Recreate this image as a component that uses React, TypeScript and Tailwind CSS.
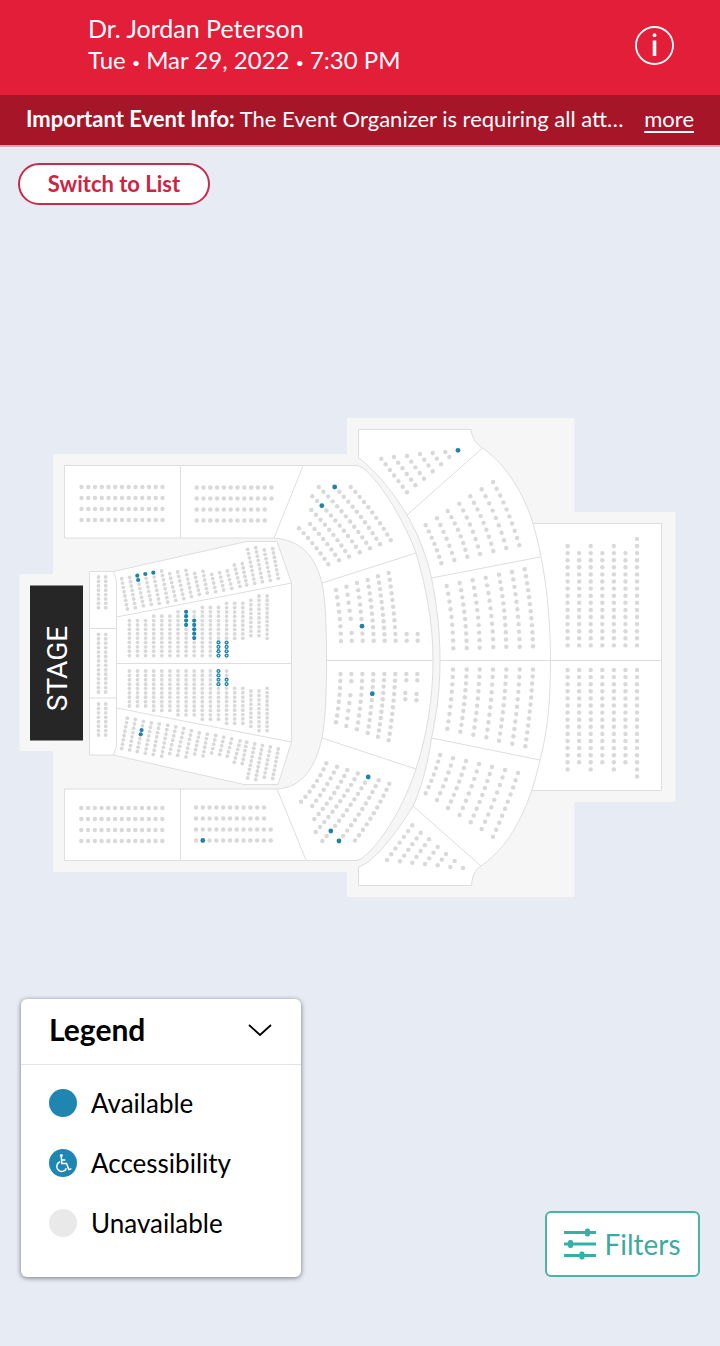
import { useState } from 'react';

type Row = {
  from: [number, number];
  to: [number, number];
  count: number;
  // how far the middle of the row bends away from a straight line
  bend?: number;
  available?: number[];
  accessible?: number[];
};

const row = (
  x1: number,
  y1: number,
  x2: number,
  y2: number,
  count: number,
  bend = 0,
  available: number[] = [],
): Row => ({ from: [x1, y1], to: [x2, y2], count, bend, available });

// ── Side boxes ─────────────────────────────────────────────────────────────
const boxRows: Row[] = [
  row(81.5, 487, 162.5, 487, 13),
  row(81.5, 498, 162.5, 498, 13),
  row(81.5, 509, 162.5, 509, 13),
  row(81.5, 520, 162.5, 520, 13),
  row(196.7, 487.5, 271.5, 487.5, 12),
  row(196.7, 498.5, 271.5, 498.5, 12),
  row(196.7, 509.5, 264.7, 509.5, 11),
  row(196.7, 520.5, 264.7, 520.5, 11),
  row(81.3, 808, 162.3, 808, 13),
  row(81.3, 819, 162.3, 819, 13),
  row(81.3, 830, 162.3, 830, 13),
  row(81.3, 841, 162.3, 841, 13),
  row(196, 807.5, 264, 807.5, 11),
  row(196, 818.5, 264, 818.5, 11),
  row(196, 829.5, 270.7, 829.5, 12),
  row(196, 840.5, 270.7, 840.5, 12, 0, [1]),
];

// ── Pit, in front of the stage ─────────────────────────────────────────────
const pitRows: Row[] = [98.5, 105.7].flatMap(x => [
  row(x, 577, x, 607.7, 8),
  row(x, 634.3, x, 692, 14),
  row(x, 704, x, 735, 8),
]);

// ── Orchestra, angled sides ────────────────────────────────────────────────
const ORCHESTRA_AXIS = 663.6;

const angledTop: Row[] = [
  row(121.7, 578.7, 127.3, 609, 8),
  row(129.7, 577.3, 135.3, 607.7, 8),
  row(137.3, 575.7, 143.3, 605.7, 8, 0, [0, 1]),
  row(145.3, 574, 151.3, 604.3, 8, 0, [0]),
  row(153.3, 572.7, 159.3, 603.3, 8, 0, [0]),
  row(161.7, 571, 167.7, 602, 8),
  row(169.7, 573.7, 175.7, 600.3, 7),
  row(177.7, 572, 183.7, 598.7, 7),
  row(186, 570.3, 191.3, 596.5, 7),
  row(194.7, 573.3, 199.3, 594.3, 6),
  row(203, 571.3, 207.3, 593, 6),
  row(211.7, 574.3, 215.7, 591.7, 5),
  row(219.7, 572.7, 223.7, 590, 5),
  row(227.3, 571, 231.7, 588.3, 5),
  row(234.3, 565, 240, 586.3, 6),
  row(242.3, 563.7, 246.7, 585, 6),
  row(247.7, 549.3, 254.7, 583.3, 9),
  row(255.7, 547.7, 262.3, 581.7, 9),
  row(264.3, 550, 270.3, 580.3, 8),
  row(272.7, 548.7, 278.3, 578.3, 8),
];

const flip = (r: Row, axis: number): Row => ({
  from: [r.from[0], axis * 2 - r.from[1]],
  to: [r.to[0], axis * 2 - r.to[1]],
  count: r.count,
});

const angledBottom: Row[] = angledTop.map((r, i) => ({
  ...flip(r, ORCHESTRA_AXIS),
  available: i === 2 ? [4, 5] : [],
}));

// ── Orchestra, centre ──────────────────────────────────────────────────────
// [top, bottom] of each column, counted from the stage
const centerColumns: [number, number][] = [
  [620.6, 655.6],
  [620.6, 655.6],
  [620.6, 655.6],
  [616.2, 655.6],
  [616.2, 655.6],
  [616.2, 655.6],
  [611.8, 655.6],
  [611.8, 655.6],
  [611.8, 655.6],
  [607.4, 655.6],
  [607.4, 655.6],
  [607.4, 655.6],
  [603.3, 655.6],
  [603.3, 638.3],
  [603.3, 638.3],
  [600.3, 635.6],
  [596, 635.6],
  [596, 638.3],
];

const centerTop: Row[] = centerColumns.map(([top, bottom], i) => {
  const x = 129.4 + i * 8.1;
  const count = Math.round((bottom - top) / 4.38) + 1;
  return row(x, top, x, bottom, count);
});
const centerBottom: Row[] = centerTop.map(r => flip(r, 663.3));

centerTop[7].available = [0, 1, 2, 3];
centerTop[8].available = [2, 3, 4, 5, 6];
centerTop[11].accessible = [8, 9, 10, 11];
centerTop[12].accessible = [9, 10, 11, 12];
centerBottom[11].accessible = [8, 9, 10, 11];
centerBottom[12].accessible = [9, 10];

// ── Inner ring ─────────────────────────────────────────────────────────────
const innerRows: Row[] = [
  row(299, 528.3, 328.3, 564.3, 8, 1),
  row(310, 524, 339, 560.3, 8, 1),
  row(311.3, 510, 349, 556.5, 10, 1.5),
  row(312.3, 496.3, 359.7, 552.3, 12, 2, [2]),
  row(318.7, 487, 370, 548.3, 13, 2),
  row(334.7, 487, 380, 544.3, 12, 2, [0]),
  row(350.7, 487, 390.7, 540.3, 11, 2),

  row(336, 590, 341, 641, 8, 1),
  row(346.5, 586.7, 350.7, 618.7, 5),
  row(351.7, 633, 351.7, 640.7, 2),
  row(357, 583, 362.7, 640.7, 9, 1, [6]),
  row(367.7, 580, 373.7, 640.7, 10, 1),
  row(378, 576.3, 384.7, 640.7, 11, 1),
  row(388.7, 573, 395.7, 640.7, 11, 1),
  row(406.7, 634, 406.7, 640.7, 2),
  row(417.7, 634, 417.7, 640.7, 2),

  row(340.5, 674, 336, 722.3, 8, 1),
  row(351.3, 674, 351.3, 681.3, 2),
  row(350.3, 695.3, 346.3, 726, 5),
  row(362.3, 674, 357, 729.3, 9, 1),
  row(373.3, 674, 367.7, 733, 10, 1, [3]),
  row(384.3, 674, 378, 736.7, 11, 1),
  row(395.3, 674, 388.7, 740.3, 11, 1),
  row(406.3, 674, 406.3, 680.3, 2),
  row(405.3, 693, 405.3, 699.3, 2),
  row(417.3, 674, 417.3, 680.3, 2),
  row(416.5, 694, 416.5, 700.3, 2),

  row(326.3, 763.3, 301, 801.7, 8, 2),
  row(337, 766.7, 312.3, 806, 8, 1),
  row(347.3, 770, 314.3, 819, 10, 2),
  row(357.8, 773.5, 315.7, 832, 12, 2),
  row(368.2, 777, 322.3, 841, 13, 2, [0, 10]),
  row(378.7, 780.3, 339, 841, 12, 2, [11]),
  row(389.3, 783.7, 355, 840.5, 11, 2),
];

// ── Outer ring ─────────────────────────────────────────────────────────────
const outerRows: Row[] = [
  row(381.3, 458.7, 407, 492.3, 7),
  row(394, 457, 415.3, 485.3, 6),
  row(407, 456, 424, 478.7, 5),
  row(420, 454, 432.7, 471.3, 4),
  row(432.7, 453, 441, 464.3, 3),
  row(445.3, 452, 449.3, 457, 2),
  row(458, 450.3, 458, 450.3, 1, 0, [0]),

  row(425.7, 525.3, 441.3, 563.3, 7, 1),
  row(437, 518.3, 454.3, 560, 7, 1),
  row(447.7, 511, 467.3, 556.7, 8, 2),
  row(459.3, 503.7, 480, 554, 8, 2),
  row(470.3, 496.3, 493.3, 551, 9, 2),
  row(481.7, 489.3, 506.3, 548, 9, 2),
  row(493, 482, 519.3, 545.3, 10, 2),

  row(446.7, 586, 453.3, 648.3, 9, 1.5),
  row(459.7, 583, 466.7, 648, 10, 1.5),
  row(472.7, 580.3, 479.7, 647.7, 10, 1.5),
  row(485.7, 577.7, 493.3, 647, 10, 1.5),
  row(499, 574.7, 506.3, 646.7, 11, 1.5),
  row(512, 572, 519.7, 646.7, 11, 1.5),
  row(524.7, 569.3, 533, 646.3, 12, 1.5),

  row(453, 669.5, 447.3, 728.7, 9, 1),
  row(466.7, 669.5, 460.3, 731.7, 10, 1),
  row(479.7, 669.5, 473.3, 734.7, 10, 1),
  row(493, 669.5, 486.3, 737.3, 10, 1),
  row(506.3, 669.5, 499, 740.7, 11, 1),
  row(519.7, 669.5, 512.3, 743.7, 11, 1),
  row(533, 669.5, 525.3, 746.3, 12, 1),

  row(440, 755, 425.7, 793.3, 7, 1),
  row(453, 758.3, 437, 800, 7, 1),
  row(466, 761, 448, 808, 8, 1),
  row(479, 764, 459.7, 815, 8, 1),
  row(492, 767, 470.7, 822.3, 9, 1),
  row(505, 770, 481.7, 829, 9, 1),
  row(518, 773, 493, 836.7, 10, 1),

  row(412.3, 825.3, 387, 860, 7),
  row(420.7, 832.7, 400, 861.3, 6),
  row(429, 839.3, 412.3, 862.7, 5),
  row(437.7, 847, 425, 864, 4),
  row(446, 854, 437.7, 865.3, 3),
  row(454.7, 861, 450.3, 867, 2),
  row(463, 868, 463, 868, 1),
];

// ── Balcony ────────────────────────────────────────────────────────────────
const balconyRows: Row[] = [15, 14, 15, 14, 15, 14, 16].flatMap((count, i) => {
  const x = 567.6 + i * 11.57;
  const length = (count - 1) * 7.1;
  return [
    row(x, 645.4 - length, x, 645.4, count),
    row(x, 670, x, 670 + length, count),
  ];
});

function SeatRow({ seats, r }: { seats: Row; r: number }) {
  const [x1, y1] = seats.from;
  const [x2, y2] = seats.to;
  const dx = x2 - x1;
  const dy = y2 - y1;
  const length = Math.hypot(dx, dy) || 1;

  return (
    <>
      {Array.from({ length: seats.count }, (_, i) => {
        const t = seats.count > 1 ? i / (seats.count - 1) : 0;
        const bulge = 4 * t * (1 - t) * (seats.bend ?? 0);
        const cx = x1 + dx * t + (dy / length) * bulge;
        const cy = y1 + dy * t - (dx / length) * bulge;
        if (seats.accessible?.includes(i)) {
          return (
            <g key={i}>
              <circle cx={cx} cy={cy} r={2.1} fill="#1f82ad" />
              <circle cx={cx} cy={cy} r={0.8} fill="#d3e8f1" />
            </g>
          );
        }
        const available = seats.available?.includes(i);
        return (
          <circle
            key={i}
            cx={cx}
            cy={cy}
            r={available ? r + 0.2 : r}
            fill={available ? '#1f82ad' : '#d9d9d9'}
          />
        );
      })}
    </>
  );
}

function SeatMap() {
  const small = [...pitRows, ...angledTop, ...angledBottom, ...centerTop, ...centerBottom];
  const large = [...boxRows, ...innerRows, ...outerRows, ...balconyRows];

  return (
    <svg viewBox="0 418 720 479" className="block w-full" role="img" aria-label="Seat map">
      <path
        d="M53 454H347V418H574.5V512H675.5V802H574.5V897H347V872H53V751H19.5V574H53Z"
        fill="#f6f6f6"
      />

      <g fill="#fff" stroke="#dedede" strokeWidth="1">
        <path d="M520 523.5H661.5V790.5H520Z" />
        <path d="M358.5 429.5H471C472 439 477 445 482.5 448C508 466 524 496 532 520C544 560 550.5 608 550.5 660C550.5 705 547 733 540 760C532 796 516 842 481 866C475 870 472 876 471.5 885.5H358.5V867C374 862 396 834 413 806C422 787 428 762 431.5 738C437 712 440 690 440 660C440 632 437 606 431.5 578C426 554 418 534 407 515C392 490 372 467 358.5 458Z" />
        <path d="M64.5 465.5H357C370 467 401 512 416 553C427 590 433 625 433 660C433 698 427 735 416 769C401 815 372 856 357 860.5H64.5V789H277C303 787 315 768 322 738C326 715 326.5 690 326.5 660C326.5 630 326 605 322 583C315 555 300 540 274 538H64.5Z" />
        <path d="M89.5 571.5H113.5L246.5 541.5H277L291.5 583V742L278 784.5H244L113.5 755H89.5Z" />
      </g>

      <g fill="none" stroke="#dedede" strokeWidth="1">
        <path d="M180.5 465.5V538M180.5 789V860.5M303 466L274 538M277 789L306 860" />
        <path d="M322 583L416 553M322 738L416 769M326.5 660.5H433" />
        <path d="M407 515L482.5 448M431.5 578L540 557M431.5 738L540 760M413 806L481 866" />
        <path d="M440 660.5H661.5" />
        <path d="M89.5 628.5H116M89.5 698H116M113.5 571.5L116.5 581V746L113.5 755" />
        <path d="M116.5 617L291.5 583M116.5 663.5H291.5M116.5 708L291.5 742" />
      </g>

      {small.map((seats, i) => (
        <SeatRow key={i} seats={seats} r={1.9} />
      ))}
      {large.map((seats, i) => (
        <SeatRow key={i} seats={seats} r={2.2} />
      ))}

      <rect x="30" y="585.5" width="53" height="155" fill="#262626" />
      <text
        x="57"
        y="668.5"
        fill="#fff"
        fontSize="28"
        textAnchor="middle"
        dominantBaseline="central"
        transform="rotate(-90 57 668.5)"
        className="font-[Roboto,sans-serif]"
      >
        STAGE
      </text>
    </svg>
  );
}

function InfoIcon() {
  return (
    <svg width="40" height="40" viewBox="0 0 40 40" fill="none" aria-hidden="true">
      <circle cx="19.5" cy="19.5" r="18.5" stroke="#fff" strokeWidth="1.8" />
      <circle cx="19.5" cy="9.2" r="1.9" fill="#fff" />
      <path d="M19.5 14.5V30" stroke="#fff" strokeWidth="3.6" />
    </svg>
  );
}

function AccessibleIcon() {
  return (
    <svg width="28" height="28" viewBox="0 0 28 28" fill="none" aria-hidden="true">
      <circle cx="14" cy="14" r="14" fill="#1f86b2" />
      <circle cx="12.3" cy="6.4" r="1.5" fill="#fff" />
      <path
        d="M12.3 7.5L12.8 14.5H17.6L19.8 20.6L22.4 19.6M12.6 11H16.4"
        stroke="#fff"
        strokeWidth="1.5"
      />
      <path d="M11 12.8A5 5 0 1 0 17.4 19.4" stroke="#fff" strokeWidth="1.5" />
    </svg>
  );
}

function FiltersIcon() {
  return (
    <svg width="32" height="32" viewBox="0 0 32 32" fill="none" aria-hidden="true">
      <path d="M0 4.5H32M0 16H32M0 27.5H32" stroke="#35b0a7" strokeWidth="2.8" />
      <g fill="#35b0a7">
        <rect x="21" y="0.5" width="5" height="8" rx="2" />
        <rect x="4" y="12" width="5" height="8" rx="2" />
        <rect x="15.5" y="23.5" width="5" height="8" rx="2" />
      </g>
    </svg>
  );
}

function Legend() {
  const [open, setOpen] = useState(true);

  return (
    <section className="w-[280px] rounded-md bg-white shadow-[0_1px_5px_rgba(0,0,0,0.5)]">
      <h2 className="border-b border-[#e2e2e2]">
        <button
          type="button"
          aria-expanded={open}
          onClick={() => setOpen(!open)}
          className="flex h-[65px] w-full items-center justify-between px-7 pb-1 text-[30px] font-bold"
        >
          Legend
          <svg width="26" height="14" viewBox="0 0 26 14" fill="none" aria-hidden="true">
            <path d="M2 2L13 12L24 2" stroke="#000" strokeWidth="1.8" />
          </svg>
        </button>
      </h2>
      {open && (
        <ul className="flex flex-col gap-8 px-7 pt-6 pb-10 text-[26px] leading-7">
          <li className="flex items-center gap-3.5">
            <span className="size-7 rounded-full bg-[#1f86b2]" />
            Available
          </li>
          <li className="flex items-center gap-3.5">
            <AccessibleIcon />
            Accessibility
          </li>
          <li className="flex items-center gap-3.5">
            <span className="size-7 rounded-full bg-[#e9e9e9]" />
            Unavailable
          </li>
        </ul>
      )}
    </section>
  );
}

function Dot() {
  return <span className="align-middle text-sm leading-none">•</span>;
}

export default function App() {
  return (
    <div className="flex min-h-screen flex-col bg-[#e7ebf3] font-[Lato,sans-serif] text-black">
      <header className="flex h-[95px] items-center justify-between bg-[#e31e39] pr-[45px] pb-1 pl-[88px] text-white">
        <div className="pb-1 leading-8">
          <h1 className="text-[25px]">Dr. Jordan Peterson</h1>
          <p className="text-[24px]">
            Tue <Dot /> Mar 29, 2022 <Dot /> 7:30 PM
          </p>
        </div>
        <button type="button" aria-label="Event info">
          <InfoIcon />
        </button>
      </header>

      <div className="flex h-[52px] items-center justify-between gap-3 border-b-2 border-[#d3a9b5] bg-[#a71529] px-[26px] pb-0.5 text-[22px] leading-7 text-white">
        <p>
          <strong className="font-bold">Important Event Info:</strong> The Event Organizer is
          requiring all att…
        </p>
        <a href="#info" className="underline underline-offset-4">
          more
        </a>
      </div>

      <main className="flex flex-1 flex-col">
        <div className="px-[18px] pt-4">
          <button
            type="button"
            className="h-[42px] w-48 rounded-full border-2 border-[#c82b4b] bg-white text-[22px] leading-7 font-bold text-[#cf2342]"
          >
            Switch to List
          </button>
        </div>

        <div className="mt-[213px]">
          <SeatMap />
        </div>

        <div className="mt-[102px] flex items-end justify-between pr-5 pb-16 pl-[21px]">
          <Legend />
          <button
            type="button"
            className="flex h-[66px] w-[155px] items-center justify-center gap-2 rounded-md border-2 border-[#4db3a9] bg-white text-[28px] text-[#3fa9a0]"
          >
            <FiltersIcon />
            Filters
          </button>
        </div>
      </main>
    </div>
  );
}
